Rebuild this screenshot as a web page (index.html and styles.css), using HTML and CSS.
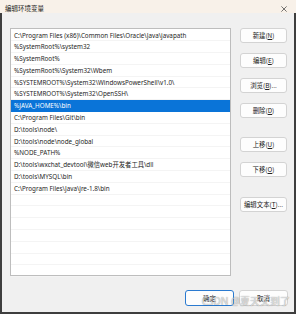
FILE: index.html
```html
<!DOCTYPE html>
<html>
<head>
<meta charset="utf-8">
<link rel="stylesheet" href="styles.css">
</head>
<body>
<div class="window">
  <div class="titlebar">
    <span class="title">编辑环境变量</span>
    <svg class="close" width="8" height="8" viewBox="0 0 8 8"><path d="M0.5 0.5L7.5 7.5M7.5 0.5L0.5 7.5" stroke="#333" stroke-width="0.9"/></svg>
  </div>
  <div class="body">
    <div class="main">
      <div class="list">
        <div class="row">C:\Program Files (x86)\Common Files\Oracle\Java\javapath</div>
        <div class="row">%SystemRoot%\system32</div>
        <div class="row">%SystemRoot%</div>
        <div class="row">%SystemRoot%\System32\Wbem</div>
        <div class="row">%SYSTEMROOT%\System32\WindowsPowerShell\v1.0\</div>
        <div class="row">%SYSTEMROOT%\System32\OpenSSH\</div>
        <div class="row selected">%JAVA_HOME%\bin</div>
        <div class="row">C:\Program Files\Git\bin</div>
        <div class="row">D:\tools\node\</div>
        <div class="row">D:\tools\node\node_global</div>
        <div class="row">%NODE_PATH%</div>
        <div class="row">D:\tools\wxchat_devtool\微信web开发者工具\dll</div>
        <div class="row">D:\tools\MYSQL\bin</div>
        <div class="row">C:\Program Files\Java\jre-1.8\bin</div>
        <div class="row"></div>
        <div class="row"></div>
        <div class="row"></div>
        <div class="row"></div>
        <div class="row"></div>
        <div class="row"></div>
        <div class="row last"></div>
      </div>
      <div class="side">
        <div class="group">
          <button class="btn">新建(<u>N</u>)</button>
          <button class="btn">编辑(<u>E</u>)</button>
          <button class="btn">浏览(<u>B</u>)...</button>
          <button class="btn">删除(<u>D</u>)</button>
        </div>
        <div class="group g2">
          <button class="btn">上移(<u>U</u>)</button>
          <button class="btn">下移(<u>O</u>)</button>
        </div>
        <div class="group g3">
          <button class="btn">编辑文本(<u>T</u>)...</button>
        </div>
      </div>
    </div>
    <div class="footer">
      <button class="btn wide default">确定</button>
      <button class="btn wide">取消</button>
    </div>
  </div>
  <div class="watermark">CSDN @夏天又到了</div>
</div>
</body>
</html>
```
FILE: styles.css
```css
* { box-sizing: border-box; }
html, body {
  margin: 0;
  padding: 0;
  width: 296px;
  height: 314px;
  overflow: hidden;
  background: #f0f0f0;
}
.window {
  position: relative;
  width: 296px;
  height: 314px;
  display: flex;
  flex-direction: column;
  font-family: "Noto Sans", "Noto Sans CJK SC", sans-serif;
  color: #1a1a1a;
}
.titlebar {
  height: 13px;
  background: #f8f1e9;
  display: flex;
  align-items: center;
  justify-content: space-between;
  padding: 0 9px 0 5px;
}
.title {
  font-size: 6.5px;
  font-family: "Noto Sans CJK SC", sans-serif;
  color: #222;
  padding-top: 3px;
}
.close { margin-top: 4px; width: 6px; height: 6px; }
.body {
  flex: 1;
  background: #f0f0f0;
  border-left: 2px solid #3e3e3e;
  border-right: 2px solid #3e3e3e;
  border-bottom: 2px solid #3e3e3e;
  display: flex;
  flex-direction: column;
  padding: 15px 6px 0 8px;
}
.main {
  display: flex;
  gap: 9px;
}
.list {
  width: 221px;
  height: 248px;
  background: #fff;
  border: 1px solid #bdbdbd;
  padding-top: 0.5px;
}
.row {
  height: 11.8px;
  line-height: 11.8px;
  padding-left: 3px;
  font-size: 6.3px;
  white-space: nowrap;
  overflow: hidden;
  border-bottom: 1px solid #f4f4f4;
  color: #1e1e1e;
}
.row.selected {
  background: #0a74d8;
  color: #fff;
  border-bottom-color: #0a74d8;
}
.side {
  display: flex;
  flex-direction: column;
  width: 47px;
}
.group {
  display: flex;
  flex-direction: column;
  gap: 10px;
}
.g2 { margin-top: 19px; }
.g3 { margin-top: 20px; }
.btn {
  height: 15px;
  width: 47px;
  padding: 0;
  margin: 0;
  background: #fdfdfd;
  border: 1px solid #d3d3d3;
  border-radius: 3px;
  font-family: "Noto Sans CJK SC", sans-serif;
  font-size: 6.4px;
  color: #222;
  line-height: 13px;
  white-space: nowrap;
}
.btn u { text-decoration: underline; }
.footer {
  margin-top: auto;
  margin-bottom: 6px;
  display: flex;
  justify-content: flex-end;
  gap: 5px;
}
.btn.wide { width: 49px; height: 16px; }
.btn.default {
  border: 1.5px solid #2a7ad0;
}
.watermark {
  position: absolute;
  right: 6px;
  bottom: 6px;
  font-family: "Noto Sans", "Noto Sans CJK SC", sans-serif;
  font-size: 10px;
  color: rgba(255,255,255,0.7);
  text-shadow: 0 0 1px rgba(0,0,0,0.55);
  pointer-events: none;
}
```
